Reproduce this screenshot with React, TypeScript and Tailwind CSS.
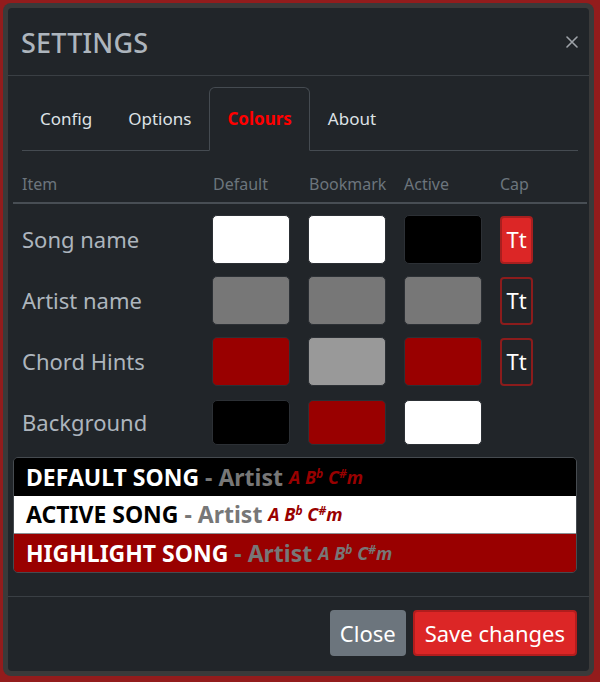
import React from "react";

const FONT = '"Noto Sans", "Open Sans", "Liberation Sans", sans-serif';

type Row = {
  label: string;
  colors: [string, string, string];
  cap?: "on" | "off";
  h: string;
};

const rows: Row[] = [
  { label: "Song name", colors: ["#ffffff", "#ffffff", "#000000"], cap: "on", h: "h-[49px]" },
  { label: "Artist name", colors: ["#777777", "#777777", "#777777"], cap: "off", h: "h-[49px]" },
  { label: "Chord Hints", colors: ["#990000", "#999999", "#990000"], cap: "off", h: "h-[49px]" },
  { label: "Background", colors: ["#000000", "#990000", "#ffffff"], h: "h-[45px]" },
];

function Chords({ color }: { color: string }) {
  return (
    <span className={`font-bold italic text-[18px] ${color}`}>
      A B<sup className="text-[12px]">b</sup> C<sup className="text-[12px]">#</sup>m
    </span>
  );
}

export default function App() {
  return (
    <div
      className="w-[600px] h-[682px] bg-[#931c1c] pl-[3px] pt-[3px]"
      style={{ fontFamily: FONT }}
    >
      <div className="w-[591px] h-[673px] rounded-[8px] bg-[#3a3a3a] p-[5px]">
        <div className="h-full rounded-[4px] bg-[#212529] flex flex-col">
          {/* Header */}
          <div className="h-[68px] shrink-0 border-b border-[#3a3f44] flex items-center justify-between pl-[13px] pr-[11px] pt-[2px]">
            <h5 className="text-[27px] leading-[36px] font-medium text-[#adb5bd] tracking-[0.2px]">
              SETTINGS
            </h5>
            <svg width="12" height="12" viewBox="0 0 12 12" className="mb-[2px]">
              <path d="M1 1 L11 11 M11 1 L1 11" stroke="#9ea3a8" strokeWidth="1.6" strokeLinecap="round" />
            </svg>
          </div>

          {/* Tabs */}
          <div className="mt-[11px] ml-[14px] mr-[11px] h-[64px] border-b border-[#454b51] flex">
            {["Config", "Options", "Colours", "About"].map((t) => {
              const active = t === "Colours";
              return (
                <div
                  key={t}
                  className={
                    active
                      ? "h-[64px] px-[17px] border border-[#454b51] border-b-[#212529] rounded-t-[6px] bg-[#212529] flex items-center text-[17px] font-bold text-[#ff0000] pb-[1px]"
                      : "h-[64px] px-[17px] border border-transparent flex items-center text-[17px] text-[#dee2e6] pb-[1px]"
                  }
                >
                  {t}
                </div>
              );
            })}
          </div>

          {/* Table */}
          <div className="mt-[15px] ml-[5px] mr-[2px]">
            <div className="grid grid-cols-[191px_96px_96px_95px_1fr] h-[38px] border-b-2 border-[#484e54] items-center text-[16px] text-[#6c757d]">
              <div className="pl-[9px]">Item</div>
              <div className="pl-[9px]">Default</div>
              <div className="pl-[9px]">Bookmark</div>
              <div className="pl-[8px]">Active</div>
              <div className="pl-[9px]">Cap</div>
            </div>
            <div className="pt-[5px]">
              {rows.map((r) => (
                <div
                  key={r.label}
                  className="grid grid-cols-[191px_96px_96px_95px_1fr] h-[61px] items-center"
                >
                  <div className="pl-[9px] text-[22px] text-[#adb5bd]">{r.label}</div>
                  {r.colors.map((c, i) => (
                    <div key={i} className="pl-[8px]">
                      <div
                        className={`w-[78px] ${r.h} rounded-[5px] border border-[#2c3035]`}
                        style={{ backgroundColor: c }}
                      />
                    </div>
                  ))}
                  <div className="pl-[9px]">
                    {r.cap && (
                      <div
                        className={
                          r.cap === "on"
                            ? "w-[33px] h-[48px] rounded-[4px] border-2 border-[#a81f1f] bg-[#dc2626] flex items-center justify-center text-[22px] text-white"
                            : "w-[33px] h-[48px] rounded-[4px] border-2 border-[#8c1c1c] flex items-center justify-center text-[22px] text-white"
                        }
                      >
                        Tt
                      </div>
                    )}
                  </div>
                </div>
              ))}
            </div>
          </div>

          {/* Preview */}
          <div className="mt-[4px] ml-[5px] mr-[12px] rounded-[5px] border border-[#464b50] overflow-hidden">
            <div className="h-[38px] bg-black px-[12px] flex items-center whitespace-nowrap">
              <span className="text-[23px] font-bold text-white">DEFAULT SONG</span>
              <span className="text-[23px] font-bold text-[#777777]">&nbsp;- Artist&nbsp;</span>
              <Chords color="text-[#990000]" />
            </div>
            <div className="h-[38px] bg-white px-[12px] flex items-center whitespace-nowrap border-b border-[#8a8f94]">
              <span className="text-[23px] font-bold text-black">ACTIVE SONG</span>
              <span className="text-[23px] font-bold text-[#777777]">&nbsp;- Artist&nbsp;</span>
              <Chords color="text-[#990000]" />
            </div>
            <div className="h-[38px] bg-[#990000] px-[12px] flex items-center whitespace-nowrap">
              <span className="text-[23px] font-bold text-white">HIGHLIGHT SONG</span>
              <span className="text-[23px] font-bold text-[#777777]">&nbsp;- Artist&nbsp;</span>
              <Chords color="text-[#777777]" />
            </div>
          </div>

          <div className="flex-1" />

          {/* Footer */}
          <div className="h-[75px] shrink-0 border-t border-[#3a3f44] flex items-start justify-end gap-[7px] pt-[13px] pr-[12px]">
            <button className="h-[46px] px-[10px] rounded-[4px] bg-[#6c757d] text-[22px] text-white leading-none">
              Close
            </button>
            <button className="h-[46px] px-[10px] rounded-[4px] bg-[#dc2626] border-2 border-[#b21d1d] text-[22px] text-white leading-none">
              Save changes
            </button>
          </div>
        </div>
      </div>
    </div>
  );
}
